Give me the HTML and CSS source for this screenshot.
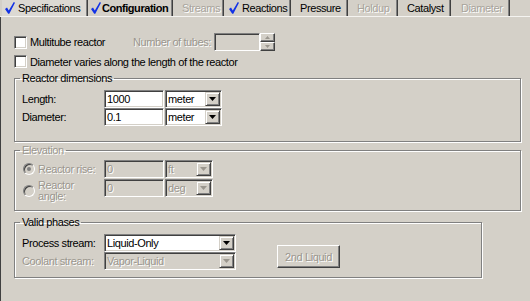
FILE: index.html
```html
<!DOCTYPE html>
<html lang="en">
<head>
    <meta charset="UTF-8">
    <title>Reactor Configuration</title>
    <link rel="stylesheet" href="styles.css">
</head>
<body>
    <!-- Tab strip -->
    <div class="tabs">
        <div class="tab tab-spec tab-hover">
            <svg class="tick" viewBox="0 0 10 12"><polygon points="0,7 2,5.6 3.8,8.4 8.8,0 10,0.7 4.3,11.8 3.2,11.8"/></svg>Specifications
        </div>
        <div class="tab tab-config tab-active">
            <svg class="tick" viewBox="0 0 10 12"><polygon points="0,7 2,5.6 3.8,8.4 8.8,0 10,0.7 4.3,11.8 3.2,11.8"/></svg>Configuration
        </div>
        <div class="tab tab-streams tab-off">Streams</div>
        <div class="tab tab-reactions">
            <svg class="tick" viewBox="0 0 10 12"><polygon points="0,7 2,5.6 3.8,8.4 8.8,0 10,0.7 4.3,11.8 3.2,11.8"/></svg>Reactions
        </div>
        <div class="tab tab-pressure">Pressure</div>
        <div class="tab tab-holdup tab-off">Holdup</div>
        <div class="tab tab-catalyst">Catalyst</div>
        <div class="tab tab-diameter tab-off">Diameter</div>
    </div>

    <div class="panel">
        <!-- Top options -->
        <div class="opt-row">
            <span class="check"></span>
            <span class="check-label">Multitube reactor</span>
            <span class="tubes-label off">Number of tubes:</span>
            <span class="field field-off tubes-field"></span>
            <span class="spinner">
                <span class="spin-btn"><svg viewBox="0 0 5 3"><polygon points="0,3 5,3 2.5,0"/></svg></span>
                <span class="spin-btn"><svg viewBox="0 0 5 3"><polygon points="0,0 5,0 2.5,3"/></svg></span>
            </span>
        </div>
        <div class="opt-row">
            <span class="check"></span>
            <span>Diameter varies along the length of the reactor</span>
        </div>

        <!-- Reactor dimensions -->
        <fieldset class="group group-wide">
            <legend>Reactor dimensions</legend>
            <div class="field-row">
                <span class="field-label">Length:</span>
                <span class="field len-field">1000</span>
                <span class="combo unit-combo"><span class="combo-value">meter</span><span class="drop"><svg viewBox="0 0 7 4"><polygon points="0,0 7,0 3.5,4"/></svg></span></span>
            </div>
            <div class="field-row">
                <span class="field-label">Diameter:</span>
                <span class="field len-field">0.1</span>
                <span class="combo unit-combo"><span class="combo-value">meter</span><span class="drop"><svg viewBox="0 0 7 4"><polygon points="0,0 7,0 3.5,4"/></svg></span></span>
            </div>
        </fieldset>

        <!-- Elevation (disabled) -->
        <fieldset class="group group-wide group-off">
            <legend class="off">Elevation</legend>
            <div class="field-row">
                <span class="radio-label"><span class="radio radio-on"></span><span class="off">Reactor rise:</span></span>
                <span class="field field-off len-field">0</span>
                <span class="combo combo-off small-combo"><span class="combo-value">ft</span><span class="drop"><svg viewBox="0 0 7 4"><polygon points="0,0 7,0 3.5,4"/></svg></span></span>
            </div>
            <div class="field-row field-row-tall">
                <span class="radio-label"><span class="radio"></span><span class="off two-line">Reactor<br>angle:</span></span>
                <span class="field field-off len-field">0</span>
                <span class="combo combo-off small-combo"><span class="combo-value">deg</span><span class="drop"><svg viewBox="0 0 7 4"><polygon points="0,0 7,0 3.5,4"/></svg></span></span>
            </div>
        </fieldset>

        <!-- Valid phases -->
        <fieldset class="group group-narrow">
            <legend>Valid phases</legend>
            <div class="phase-wrap">
                <div class="phase-list">
                    <div class="field-row">
                        <span class="field-label">Process stream:</span>
                        <span class="combo phase-combo"><span class="combo-value">Liquid-Only</span><span class="drop"><svg viewBox="0 0 7 4"><polygon points="0,0 7,0 3.5,4"/></svg></span></span>
                    </div>
                    <div class="field-row">
                        <span class="field-label off">Coolant stream:</span>
                        <span class="combo combo-off phase-combo"><span class="combo-value">Vapor-Liquid</span><span class="drop"><svg viewBox="0 0 7 4"><polygon points="0,0 7,0 3.5,4"/></svg></span></span>
                    </div>
                </div>
                <button class="btn btn-off" type="button">2nd Liquid</button>
            </div>
        </fieldset>
    </div>
</body>
</html>
```

FILE: styles.css
```css
body {
    margin: 0;
    width: 530px;
    height: 301px;
    overflow: hidden;
    background: #d4d0c8;
    font-family: "Liberation Sans", Arial, sans-serif;
    font-size: 11px;
    letter-spacing: -0.4px;
    color: #000;
}
.off {
    color: #9a968e;
    text-shadow: 1px 1px 0 #fff;
}

/* tabs */
.tabs {
    display: flex;
    height: 16px;
    padding-left: 2px;
    border-bottom: 1px solid #f4f3f0;
}
.tab {
    display: flex;
    align-items: center;
    box-sizing: border-box;
    padding-left: 8px;
    margin-right: 1px;
    border-right: 1px solid #404040;
    box-shadow: inset -1px 0 0 #808080;
    white-space: nowrap;
    overflow: hidden;
}
.tab-spec { width: 86px; padding-left: 3px; }
.tab-config { width: 84px; padding-left: 2px; }
.tab-streams { width: 50px; }
.tab-reactions { width: 66px; padding-left: 4px; }
.tab-pressure { width: 56px; }
.tab-holdup { width: 49px; }
.tab-catalyst { width: 52px; }
.tab-diameter { width: 58px; padding-left: 9px; }
.tab-hover {
    background: #dcd9d3;
}
.tab-active {
    font-weight: bold;
    letter-spacing: -0.45px;
}
.tab-active .tick {
    margin-right: 1px;
}
.tab-off {
    color: #a8a49c;
    text-shadow: 1px 1px 0 #fff;
}
.tick {
    flex: none;
    width: 10px;
    height: 12px;
    margin-right: 3px;
    fill: #1232e6;
}

.panel {
    height: 284px;
    border-left: 1px solid #404040;
    padding: 15px 0 0 13px;
    box-sizing: border-box;
}

/* top check rows */
.opt-row {
    display: flex;
    align-items: center;
    height: 19px;
}
.opt-row:first-child {
    height: 20px;
}
.check {
    width: 13px;
    height: 13px;
    box-sizing: border-box;
    margin-right: 3px;
    background: #fff;
    border: 1px solid;
    border-color: #808080 #fff #fff #808080;
    box-shadow: inset 1px 1px 0 #404040, inset -1px -1px 0 #d4d0c8;
}
.check-label {
    width: 103px;
}
.tubes-label {
    width: 81px;
}
.tubes-field {
    width: 46px;
    height: 20px;
}
.spinner {
    display: flex;
    flex-direction: column;
    width: 15px;
    height: 18px;
}
.spin-btn {
    flex: 1;
    display: flex;
    align-items: center;
    justify-content: center;
    box-sizing: border-box;
    border: 1px solid;
    border-color: #fff #404040 #404040 #fff;
    box-shadow: inset -1px -1px 0 #808080;
}
.spin-btn svg {
    width: 5px;
    height: 3px;
    fill: #9a968e;
}

/* group boxes */
.group {
    margin: 1px 9px 0 0;
    padding: 5px 5px 15px 5px;
    border: 1px solid #808080;
    box-shadow: inset 1px 1px 0 #fff, 1px 1px 0 #fff;
    min-width: 0;
}
.group legend {
    padding: 0 2px;
    line-height: 13px;
}
.group-off {
    margin-top: 2px;
    padding-top: 3px;
    padding-bottom: 7px;
}
.group-narrow {
    margin: 5px 48px 0 0;
    padding-bottom: 7px;
}

.field-row {
    display: flex;
    align-items: center;
    height: 18px;
}
.group-off .field-row + .field-row {
    margin-top: 1px;
}
.field-row-tall {
    height: 24px;
    align-items: flex-start;
}
.field-label {
    width: 82px;
    padding-left: 2px;
}

.field {
    display: block;
    box-sizing: border-box;
    height: 18px;
    padding: 1px 0 0 2px;
    line-height: 14px;
    background: #fff;
    border: 1px solid;
    border-color: #808080 #fff #fff #808080;
    box-shadow: inset 1px 1px 0 #404040, inset -1px -1px 0 #d4d0c8;
}
.field-off {
    background: #d4d0c8;
    color: #9a968e;
    text-shadow: 1px 1px 0 #fff;
}
.len-field {
    width: 60px;
    margin-right: 1px;
}

.combo {
    display: flex;
    box-sizing: border-box;
    height: 18px;
    padding: 1px;
    background: #fff;
    border: 1px solid;
    border-color: #808080 #fff #fff #808080;
    box-shadow: inset 1px 1px 0 #404040, inset -1px -1px 0 #d4d0c8;
}
.combo-value {
    flex: 1;
    padding-left: 1px;
    line-height: 15px;
}
.drop {
    display: flex;
    align-items: center;
    justify-content: center;
    width: 15px;
    box-sizing: border-box;
    background: #d4d0c8;
    border: 1px solid;
    border-color: #d4d0c8 #404040 #404040 #d4d0c8;
    box-shadow: inset 1px 1px 0 #fff, inset -1px -1px 0 #808080;
}
.drop svg {
    width: 7px;
    height: 4px;
    fill: #000;
}
.combo-off {
    background: #d4d0c8;
    color: #9a968e;
    text-shadow: 1px 1px 0 #fff;
}
.combo-off .drop svg {
    fill: #9a968e;
}
.unit-combo {
    width: 57px;
}
.small-combo {
    width: 48px;
}
.phase-combo {
    width: 132px;
}

/* radios */
.radio-label {
    display: flex;
    align-items: center;
    width: 81px;
    padding-left: 3px;
}
.field-row-tall .radio-label {
    margin-top: 1px;
}
.radio {
    position: relative;
    width: 12px;
    height: 12px;
    box-sizing: border-box;
    margin-right: 3px;
    border-radius: 50%;
    background: #d4d0c8;
    border: 1px solid;
    border-color: #808080 #fff #fff #808080;
    box-shadow: inset 1px 1px 0 #404040;
}
.radio-on::after {
    content: "";
    position: absolute;
    left: 3px;
    top: 3px;
    width: 4px;
    height: 4px;
    border-radius: 50%;
    background: #808080;
}
.two-line {
    line-height: 11px;
}

/* valid phases */
.phase-wrap {
    display: flex;
    align-items: flex-start;
}
.btn {
    margin: 11px 0 0 41px;
    width: 63px;
    height: 23px;
    padding: 0;
    font: inherit;
    letter-spacing: inherit;
    background: #d4d0c8;
    border: 1px solid;
    border-color: #fff #404040 #404040 #fff;
    box-shadow: inset -1px -1px 0 #808080;
}
.btn-off {
    color: #9a968e;
    text-shadow: 1px 1px 0 #fff;
}
```
